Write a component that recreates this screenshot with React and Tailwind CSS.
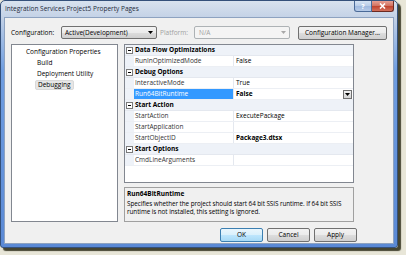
import React from 'react'

const font = { fontFamily: '"Open Sans", "Noto Sans", sans-serif' }

const Arrow = ({ color = '#000' }) => (
  <svg width="5" height="3" viewBox="0 0 5 3">
    <path d="M0 0 H5 L2.5 3 Z" fill={color} />
  </svg>
)

const MinusBox = () => (
  <div className="w-[7px] h-[7px] border border-[#7a7a7a] bg-white flex items-center justify-center">
    <div className="w-[3px] h-px bg-black" />
  </div>
)

const rows = [
  { cat: 'Data Flow Optimizations' },
  { name: 'RunInOptimizedMode', value: 'False' },
  { cat: 'Debug Options' },
  { name: 'InteractiveMode', value: 'True' },
  { name: 'Run64BitRuntime', value: 'False', bold: true, selected: true },
  { cat: 'Start Action' },
  { name: 'StartAction', value: 'ExecutePackage' },
  { name: 'StartApplication', value: '' },
  { name: 'StartObjectID', value: 'Package3.dtsx', bold: true },
  { cat: 'Start Options' },
  { name: 'CmdLineArguments', value: '' },
]

const Button = ({ children, width, focused }) => (
  <div
    className={`h-[14px] rounded-[2px] border flex items-center justify-center text-[6.5px] text-black ${width} ${
      focused
        ? 'border-[#3c7fb1] bg-[linear-gradient(to_bottom,#eaf6fd_0%,#d9f0fc_50%,#bee6fd_51%,#a7d9f5_100%)]'
        : 'border-[#707070] bg-[linear-gradient(to_bottom,#f2f2f2_0%,#ebebeb_50%,#dddddd_51%,#cfcfcf_100%)]'
    }`}
  >
    {children}
  </div>
)

export default function App() {
  return (
    <div className="w-[406px] h-[255px] bg-[#e8e6d8] overflow-hidden" style={font}>
      <div className="w-[398px] h-[248px] rounded-t-[5px] rounded-b-[3px] border border-[#34507a] shadow-[3px_3px_1px_rgba(40,40,20,0.85)] bg-[linear-gradient(to_bottom,#d8e2ee_0px,#c4d2e6_16px,#a8c1e5_32px,#6f9de0_70px,#5a89d5_100%)] flex flex-col px-[3px] pb-[3px]">
        {/* Title bar */}
        <div className="h-[16px] flex items-start justify-between">
          <div className="pl-[1px] pt-[4px] text-[6.5px] leading-[8px] text-[#1e2a3a]">
            Integration Services Project5 Property Pages
          </div>
          <div className="flex">
            <div className="w-[18px] h-[11px] rounded-bl-[3px] border border-t-0 border-[#4a6a98] bg-[linear-gradient(to_bottom,#d6e3f3_0%,#b9cde8_50%,#9fb9df_51%,#b7cbe8_100%)] flex items-center justify-center text-[7px] font-bold leading-none text-white">
              ?
            </div>
            <div className="w-[22px] h-[11px] rounded-br-[3px] border border-l-0 border-t-0 border-[#6b2a22] bg-[linear-gradient(to_bottom,#e8a093_0%,#d0705f_50%,#c0412c_51%,#d2705c_100%)] flex items-center justify-center">
              <svg width="7" height="6" viewBox="0 0 7 6">
                <path d="M1 0.5 L6 5.5 M6 0.5 L1 5.5" stroke="#fff" strokeWidth="1.6" />
              </svg>
            </div>
          </div>
        </div>

        {/* Client area */}
        <div className="flex-1 bg-[#f0f0f0] border border-[#8da2c0] pl-[6px] flex flex-col text-[6.5px] leading-[8px] text-black">
          {/* Configuration row */}
          <div className="mt-[8px] h-[13px] flex items-center">
            <div className="w-[50px]">Configuration:</div>
            <div className="w-[96px] h-[13px] rounded-[2px] border border-[#707070] bg-[linear-gradient(to_bottom,#f2f2f2_0%,#ebebeb_50%,#dddddd_51%,#cfcfcf_100%)] flex items-center justify-between pl-[3px] pr-[3px]">
              <span>Active(Development)</span>
              <Arrow />
            </div>
            <div className="w-[37px] pl-[3px] text-[#a0a0a0]">Platform:</div>
            <div className="w-[96px] h-[13px] rounded-[2px] border border-[#adb2b5] bg-[#f4f4f4] flex items-center justify-between pl-[4px] pr-[3px] text-[#a0a0a0]">
              <span>N/A</span>
              <Arrow color="#a8a8a8" />
            </div>
            <div className="ml-[8px]">
              <Button width="w-[89px]">Configuration Manager...</Button>
            </div>
          </div>

          {/* Panels */}
          <div className="mt-[5px] flex">
            {/* Tree */}
            <div className="w-[107px] h-[178px] bg-white border border-[#828790] pt-[1px]">
              <div className="pl-[14px] h-[11px] flex items-center">Configuration Properties</div>
              <div className="pl-[25px] h-[11px] flex items-center">Build</div>
              <div className="pl-[25px] h-[11px] flex items-center">Deployment Utility</div>
              <div className="pl-[23px] h-[11px] flex items-center">
                <span className="px-[2px] h-[10px] flex items-center rounded-[2px] bg-[#e6e6e6] border border-[#d9d9d9]">
                  Debugging
                </span>
              </div>
            </div>

            {/* Grid + description */}
            <div className="ml-[6px] w-[230px] flex flex-col">
              <div className="h-[139px] bg-white border border-[#828790] flex flex-col">
                {rows.map((r, i) =>
                  r.cat ? (
                    <div key={i} className="h-[11px] flex items-center bg-[#eef2f8] border-b border-[#e4e8ef]">
                      <div className="w-[9px] flex justify-center">
                        <MinusBox />
                      </div>
                      <div className="pl-[1px] font-bold">{r.cat}</div>
                    </div>
                  ) : (
                    <div key={i} className="h-[11px] flex border-b border-[#eceff4]">
                      <div className="w-[9px] bg-[#eef2f8]" />
                      <div
                        className={`w-[100px] pl-[1px] flex items-center border-r border-[#e4e8ef] ${
                          r.selected ? 'bg-[#3399ff] text-white' : 'text-[#333]'
                        }`}
                      >
                        {r.name}
                      </div>
                      <div className={`flex-1 pl-[2px] flex items-center justify-between ${r.bold ? 'font-bold' : ''}`}>
                        <span>{r.value}</span>
                        {r.selected && (
                          <div className="w-[9px] h-[9px] mr-[1px] border border-[#707070] bg-[linear-gradient(to_bottom,#f2f2f2,#d4d4d4)] flex items-center justify-center">
                            <Arrow />
                          </div>
                        )}
                      </div>
                    </div>
                  )
                )}
              </div>
              <div className="mt-[4px] h-[35px] border border-[#a0a0a0] bg-[#f0f0f0] pl-[2px] pr-[1px] pt-[1px]">
                <div className="font-bold h-[9px] flex items-center">Run64BitRuntime</div>
                <div className="mt-[2px] text-[6.3px] tracking-[-0.05px]">
                  Specifies whether the project should start 64 bit SSIS runtime. If 64 bit SSIS runtime is not installed, this setting is ignored.
                </div>
              </div>
            </div>
          </div>

          {/* Buttons */}
          <div className="mt-[6px] flex pl-[209px] gap-[4px]">
            <Button width="w-[43px]" focused>OK</Button>
            <Button width="w-[43px]">Cancel</Button>
            <Button width="w-[43px]">Apply</Button>
          </div>
        </div>
      </div>
    </div>
  )
}
